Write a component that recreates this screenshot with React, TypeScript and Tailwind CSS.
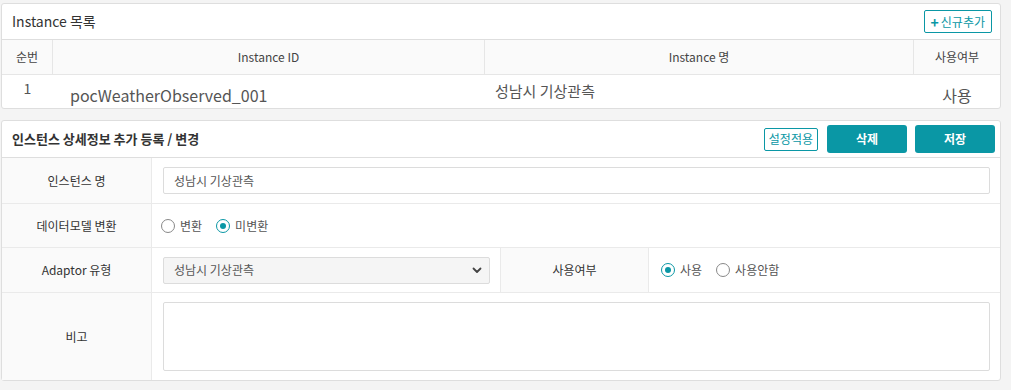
import React from 'react'

const teal = '#0a97a5'

function Radio({ checked, label }: { checked?: boolean; label: string }) {
  return (
    <label className="flex items-center gap-[5px] text-[12px] text-[#555]">
      <span
        className={`flex h-[14px] w-[14px] items-center justify-center rounded-full border bg-white ${
          checked ? 'border-[#0a97a5]' : 'border-[#888]'
        }`}
      >
        {checked && <span className="h-[6px] w-[6px] rounded-full bg-[#0a97a5]" />}
      </span>
      {label}
    </label>
  )
}

function LabelCell({ children, className = '' }: { children: React.ReactNode; className?: string }) {
  return (
    <div className={`flex items-center justify-center bg-[#fafafa] text-[12px] text-[#333] ${className}`}>
      {children}
    </div>
  )
}

export default function App() {
  return (
    <div
      className="min-h-[390px] w-[1011px] bg-[#f4f4f4] pt-[3px]"
      style={{ fontFamily: '"Noto Sans CJK KR", "Noto Sans", sans-serif' }}
    >
      {/* Instance 목록 */}
      <div className="ml-[1px] w-[1000px] rounded-[3px] border border-[#dedede] bg-white">
        <div className="flex h-[35px] items-center justify-between pl-[10px] pr-[8px]">
          <h2 className="text-[14px] text-[#333]">Instance 목록</h2>
          <button className="flex h-[23px] items-center gap-[2px] rounded-[2px] border border-[#0a97a5] px-[6px] text-[12px] text-[#0a97a5]">
            <span className="text-[14px] font-bold leading-none">+</span>신규추가
          </button>
        </div>
        <div className="grid grid-cols-[51px_432px_429px_1fr] border-t border-[#dedede] text-[12px]">
          <div className="flex h-[35px] items-center justify-center border-b border-r border-[#e6e6e6] bg-[#fafafa] text-[#444]">순번</div>
          <div className="flex h-[35px] items-center justify-center border-b border-r border-[#e6e6e6] bg-[#fafafa] text-[#444]">Instance ID</div>
          <div className="flex h-[35px] items-center justify-center border-b border-r border-[#e6e6e6] bg-[#fafafa] text-[#444]">Instance 명</div>
          <div className="flex h-[35px] items-center justify-center border-b border-[#e6e6e6] bg-[#fafafa] text-[#444]">사용여부</div>

          <div className="h-[33px] pt-[3px] text-center text-[14px] text-[#555]">1</div>
          <div className="h-[33px] pl-[17px] pt-[9px] text-[16px] leading-[22px] text-[#555]">pocWeatherObserved_001</div>
          <div className="h-[33px] pl-[10px] pt-[5px] text-[15px] leading-[22px] text-[#555]">성남시 기상관측</div>
          <div className="h-[33px] pt-[9px] text-center text-[16px] leading-[22px] text-[#555]">사용</div>
        </div>
      </div>

      {/* 인스턴스 상세정보 */}
      <div className="ml-[1px] mt-[11px] w-[1000px] rounded-[3px] border border-[#dedede] bg-white">
        <div className="flex h-[36px] items-center justify-between pl-[10px] pr-[5px]">
          <h2 className="text-[13px] font-bold text-[#333]">인스턴스 상세정보 추가 등록 / 변경</h2>
          <div className="flex items-center">
            <button className="h-[23px] rounded-[2px] border border-[#0a97a5] px-[4px] text-[12px] text-[#0a97a5]">설정적용</button>
            <button
              className="ml-[9px] h-[28px] w-[80px] rounded-[3px] text-[12px] font-bold text-white"
              style={{ backgroundColor: teal }}
            >
              삭제
            </button>
            <button
              className="ml-[8px] h-[28px] w-[80px] rounded-[3px] text-[12px] font-bold text-white"
              style={{ backgroundColor: teal }}
            >
              저장
            </button>
          </div>
        </div>

        <div className="grid grid-cols-[150px_349px_148px_1fr] border-t border-[#dedede]">
          {/* row 1 */}
          <LabelCell className="h-[46px] border-b border-r border-[#eaeaea]">인스턴스 명</LabelCell>
          <div className="col-span-3 flex h-[46px] items-center border-b border-[#eaeaea] pl-[11px] pr-[10px]">
            <input
              readOnly
              value="성남시 기상관측"
              className="h-[27px] w-full rounded-[2px] border border-[#dcdcdc] px-[10px] text-[12px] text-[#555] outline-none"
            />
          </div>

          {/* row 2 */}
          <LabelCell className="h-[44px] border-b border-r border-[#eaeaea]">데이터모델 변환</LabelCell>
          <div className="col-span-3 flex h-[44px] items-center gap-[14px] border-b border-[#eaeaea] pl-[9px]">
            <Radio label="변환" />
            <Radio checked label="미변환" />
          </div>

          {/* row 3 */}
          <LabelCell className="h-[45px] border-b border-r border-[#eaeaea]">Adaptor 유형</LabelCell>
          <div className="flex h-[45px] items-center border-b border-r border-[#eaeaea] pl-[11px] pr-[10px]">
            <div className="flex h-[27px] w-full items-center justify-between rounded-[2px] border border-[#dcdcdc] bg-[#f5f5f5] pl-[10px] pr-[6px] text-[12px] text-[#555]">
              <span>성남시 기상관측</span>
              <svg width="12" height="12" viewBox="0 0 12 12" fill="none">
                <path d="M2.5 4.5 6 8l3.5-3.5" stroke="#444" strokeWidth="1.8" strokeLinecap="round" strokeLinejoin="round" />
              </svg>
            </div>
          </div>
          <LabelCell className="h-[45px] border-b border-r border-[#eaeaea]">사용여부</LabelCell>
          <div className="flex h-[45px] items-center gap-[14px] border-b border-[#eaeaea] pl-[12px]">
            <Radio checked label="사용" />
            <Radio label="사용안함" />
          </div>

          {/* row 4 */}
          <LabelCell className="h-[87px] border-r border-[#eaeaea]">비고</LabelCell>
          <div className="col-span-3 flex h-[87px] items-center pl-[11px] pr-[10px]">
            <textarea className="h-[69px] w-full resize-none rounded-[2px] border border-[#dcdcdc] outline-none" />
          </div>
        </div>
      </div>
    </div>
  )
}
